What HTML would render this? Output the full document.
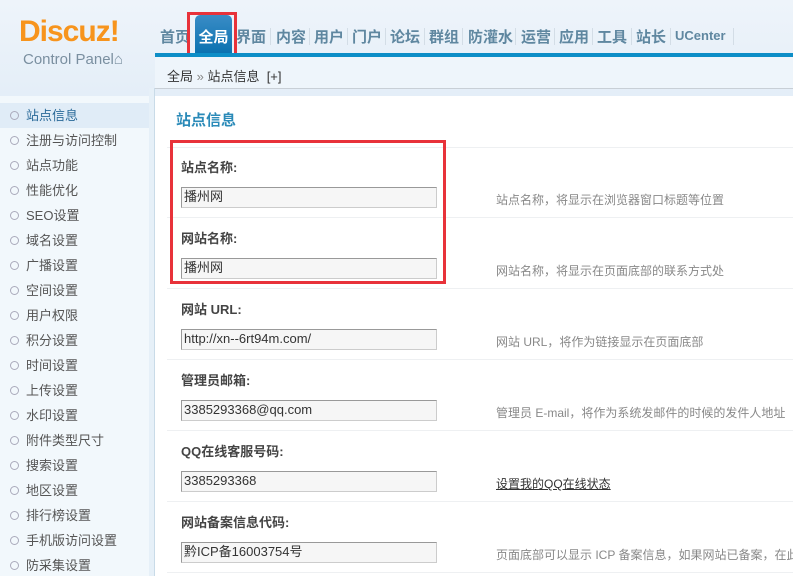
<!DOCTYPE html>
<html><head><meta charset="utf-8"><style>
*{margin:0;padding:0;box-sizing:border-box}
body{width:793px;height:576px;overflow:hidden;position:relative;background:#fff;font-family:"Liberation Sans","Noto Sans CJK SC",sans-serif;font-size:12px;color:#333}
.hdr{position:absolute;left:0;top:0;width:793px;height:96px;background:linear-gradient(#eef4fa,#e4eef8)}
.logo{position:absolute;left:19px;top:15px;font-size:30px;font-weight:bold;color:#f7941d;letter-spacing:-1px;font-family:"Liberation Sans",sans-serif}
.cp{position:absolute;left:23px;top:51px;font-size:15px;color:#7a8fa0}
.nav{position:absolute;top:26px;font-size:15px;font-weight:bold;color:#5f87a0;white-space:nowrap}
.pipe{position:absolute;top:28px;width:1px;height:17px;background:#d3dde6}
.tab{position:absolute;left:195px;top:15px;width:37px;height:38px;background:linear-gradient(#3a8cc6,#0b72b0);border-radius:5px 5px 0 0;color:#fff;font-size:15px;font-weight:bold;padding-top:11px;text-align:center}
.red{position:absolute;border:3px solid #e8323a}
.bar{position:absolute;left:155px;top:53px;width:638px;height:4px;background:#0d8ec7}
.crumb{position:absolute;left:155px;top:57px;width:638px;height:32px;background:#eef5fb;border-bottom:1px solid #c8cfd6;padding:9px 0 0 12px;font-size:13px;color:#333}
.side{position:absolute;left:0;top:96px;width:149px;height:480px;background:#f2f8fc}
.sep{position:absolute;left:149px;top:88px;width:6px;height:488px;background:#e6f0f8;border-right:1px solid #c9dbe8}
.side div{height:25px;line-height:25px;padding-left:26px;font-size:13px;color:#555;position:relative}
.side div:before{content:"";position:absolute;left:10px;top:8px;width:7px;height:7px;border:1px solid #aab;border-radius:50%}
.side .on{background:#e0ecf7;color:#2a6a99}
.h3{position:absolute;left:176px;top:109px;font-size:15px;font-weight:bold;color:#2a8ab8}
.lbl{position:absolute;left:181px;font-size:13px;font-weight:bold;color:#444}
.inp{position:absolute;left:181px;width:256px;height:21px;border:1px solid #999;border-right-color:#ccc;border-bottom-color:#ccc;background:#f6f6f6;font-size:13px;line-height:18px;padding:0 0 0 2px;color:#333}
.dsc{position:absolute;left:496px;font-size:12px;color:#888;white-space:nowrap}
.ln{position:absolute;left:167px;width:626px;height:1px;background:#eef0f2}
</style></head><body>
<div class="hdr"></div>
<div class="logo">Discuz!</div>
<div class="cp">Control Panel⌂</div>
<div class="nav" style="left:160px">首页</div>
<div class="tab">全局</div>
<div class="nav" style="left:236px">界面</div><div class="pipe" style="left:270px"></div>
<div class="nav" style="left:276px">内容</div><div class="pipe" style="left:309px"></div>
<div class="nav" style="left:314px">用户</div><div class="pipe" style="left:347px"></div>
<div class="nav" style="left:352px">门户</div><div class="pipe" style="left:385px"></div>
<div class="nav" style="left:390px">论坛</div><div class="pipe" style="left:424px"></div>
<div class="nav" style="left:429px">群组</div><div class="pipe" style="left:462px"></div>
<div class="nav" style="left:468px">防灌水</div><div class="pipe" style="left:515px"></div>
<div class="nav" style="left:521px">运营</div><div class="pipe" style="left:554px"></div>
<div class="nav" style="left:559px">应用</div><div class="pipe" style="left:592px"></div>
<div class="nav" style="left:597px">工具</div><div class="pipe" style="left:631px"></div>
<div class="nav" style="left:636px">站长</div><div class="pipe" style="left:670px"></div>
<div class="nav" style="left:675px;top:28px;font-size:13px">UCenter</div><div class="pipe" style="left:733px"></div>
<div class="red" style="left:187px;top:12px;width:50px;height:47px"></div>
<div class="bar"></div>
<div class="crumb">全局 <span style="color:#888">»</span> 站点信息 &nbsp;[+]</div>
<div class="side"><div style="height:7px"></div>
<div class="on">站点信息</div><div>注册与访问控制</div><div>站点功能</div><div>性能优化</div><div>SEO设置</div><div>域名设置</div><div>广播设置</div><div>空间设置</div><div>用户权限</div><div>积分设置</div><div>时间设置</div><div>上传设置</div><div>水印设置</div><div>附件类型尺寸</div><div>搜索设置</div><div>地区设置</div><div>排行榜设置</div><div>手机版访问设置</div><div>防采集设置</div>
</div>
<div class="sep"></div>
<div class="h3">站点信息</div>
<div class="ln" style="top:147px"></div>
<div class="lbl" style="top:157px">站点名称:</div>
<div class="inp" style="top:187px">播州网</div>
<div class="dsc" style="top:191px">站点名称，将显示在浏览器窗口标题等位置</div>
<div class="ln" style="top:217px"></div>
<div class="lbl" style="top:228px">网站名称:</div>
<div class="inp" style="top:258px">播州网</div>
<div class="dsc" style="top:262px">网站名称，将显示在页面底部的联系方式处</div>
<div class="ln" style="top:288px"></div>
<div class="lbl" style="top:299px">网站 URL:</div>
<div class="inp" style="top:329px">http://xn--6rt94m.com/</div>
<div class="dsc" style="top:333px">网站 URL，将作为链接显示在页面底部</div>
<div class="ln" style="top:359px"></div>
<div class="lbl" style="top:370px">管理员邮箱:</div>
<div class="inp" style="top:400px">3385293368@qq.com</div>
<div class="dsc" style="top:404px">管理员 E-mail，将作为系统发邮件的时候的发件人地址</div>
<div class="ln" style="top:430px"></div>
<div class="lbl" style="top:441px">QQ在线客服号码:</div>
<div class="inp" style="top:471px">3385293368</div>
<div class="dsc" style="top:475px;color:#333;text-decoration:underline">设置我的QQ在线状态</div>
<div class="ln" style="top:501px"></div>
<div class="lbl" style="top:512px">网站备案信息代码:</div>
<div class="inp" style="top:542px">黔ICP备16003754号</div>
<div class="dsc" style="top:546px">页面底部可以显示 ICP 备案信息，如果网站已备案，在此</div>
<div class="ln" style="top:572px"></div>
<div class="red" style="left:170px;top:140px;width:276px;height:144px"></div>
</body></html>
